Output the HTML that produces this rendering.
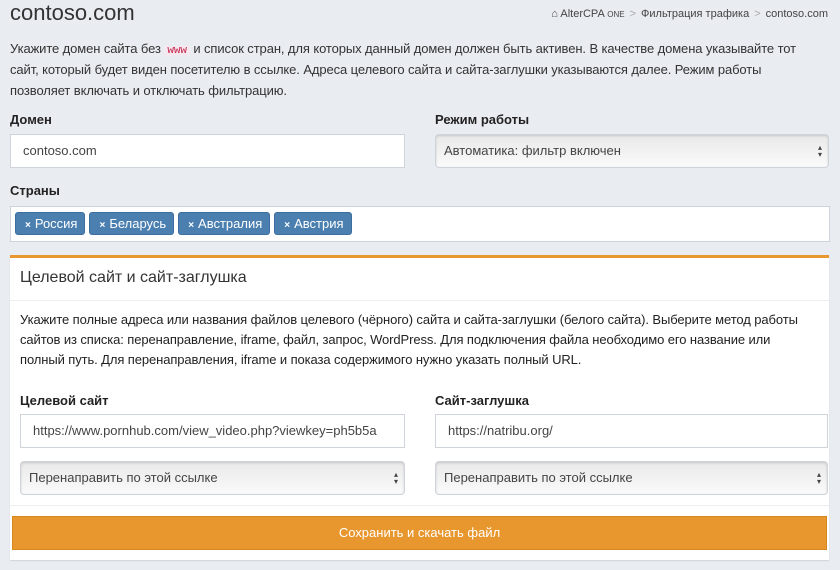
<!DOCTYPE html>
<html><head><meta charset="utf-8"><style>
*{box-sizing:border-box;margin:0;padding:0}
body{width:840px;height:570px;background:#e9ecf1;font-family:"Liberation Sans",sans-serif;color:#333;font-size:13px;position:relative;overflow:hidden}
.a{position:absolute}
h1{position:absolute;left:10px;top:0;font-size:22px;font-weight:normal;color:#333}
.bc{right:12px;top:8px;font-size:11px;color:#444}
.bc span{color:#aaa;margin:0 5px}
p{line-height:21px;font-size:13px;letter-spacing:-0.1px}
code{color:#c7254e;background:#f4e9ee;font-family:"Liberation Mono",monospace;font-size:11px;padding:0 3px;line-height:10px;display:inline-block}
label{position:absolute;font-weight:bold;font-size:13px;color:#222}
.in{position:absolute;background:#fff;border:1px solid #cfd3da;height:34px;padding-left:12px;line-height:32px;font-size:13px;color:#444;overflow:hidden;white-space:nowrap}
.sel{position:absolute;border:1px solid #cfd3da;border-radius:4px;height:34px;padding-left:8px;line-height:32px;font-size:13px;color:#444;background:linear-gradient(#e9e9ea,#fafafa);box-shadow:inset 0 1px 2px rgba(0,0,0,.15)}
.sel:after{content:"▴\A▾";white-space:pre;position:absolute;right:6px;top:9px;font-size:8px;line-height:7px;color:#444}
.tag{display:inline-block;background:#4a7fb0;color:#fff;border-radius:3px;height:23px;line-height:22px;padding:0 7px 0 9px;margin-right:4px;font-size:13px;border:1px solid #3d6f9e}
.tag b{font-size:10px;margin-right:4px}
.panel{position:absolute;left:10px;top:255px;width:819px;height:305px;background:#fff;border-top:3px solid #e8972e;box-shadow:0 1px 1px rgba(0,0,0,.1)}
</style></head><body>
<h1>contoso.com</h1>
<div class="a bc">⌂ AlterCPA <small style="font-size:8px">ONE</small><span>&gt;</span>Фильтрация трафика<span>&gt;</span>contoso.com</div>
<p class="a" style="left:10px;top:38px;width:815px">Укажите домен сайта без <code>www</code> и список стран, для которых данный домен должен быть активен. В качестве домена указывайте тот сайт, который будет виден посетителю в ссылке. Адреса целевого сайта и сайта-заглушки указываются далее. Режим работы позволяет включать и отключать фильтрацию.</p>
<label style="left:10px;top:112px">Домен</label>
<label style="left:435px;top:112px">Режим работы</label>
<div class="in" style="left:10px;top:134px;width:395px">contoso.com</div>
<div class="sel" style="left:435px;top:134px;width:394px">Автоматика: фильтр включен</div>
<label style="left:10px;top:183px">Страны</label>
<div class="in" style="left:10px;top:206px;width:820px;height:36px;padding-left:4px;line-height:normal;padding-top:5px"><span class="tag"><b>×</b>Россия</span><span class="tag"><b>×</b>Беларусь</span><span class="tag"><b>×</b>Австралия</span><span class="tag"><b>×</b>Австрия</span></div>
<div class="panel">
<div class="a" style="left:10px;top:11px;font-size:16px;color:#333">Целевой сайт и сайт-заглушка</div>
<div class="a" style="left:0;top:42px;width:819px;height:1px;background:#eceef1"></div>
<p class="a" style="left:10px;top:52px;width:795px;line-height:20px;color:#222">Укажите полные адреса или названия файлов целевого (чёрного) сайта и сайта-заглушки (белого сайта). Выберите метод работы сайтов из списка: перенаправление, iframe, файл, запрос, WordPress. Для подключения файла необходимо его название или полный путь. Для перенаправления, iframe и показа содержимого нужно указать полный URL.</p>
<label style="left:10px;top:135px">Целевой сайт</label>
<label style="left:425px;top:135px">Сайт-заглушка</label>
<div class="in" style="left:10px;top:156px;width:385px">https://www.pornhub.com/view_video.php?viewkey=ph5b5a</div>
<div class="in" style="left:425px;top:156px;width:393px">https://natribu.org/</div>
<div class="sel" style="left:10px;top:203px;width:385px">Перенаправить по этой ссылке</div>
<div class="sel" style="left:425px;top:203px;width:393px">Перенаправить по этой ссылке</div>
<div class="a" style="left:0;top:247px;width:819px;height:1px;background:#eceef1"></div>
<div class="a" style="left:2px;top:258px;width:815px;height:34px;background:#e8972e;border:1px solid #d8871e;color:#fff;text-align:center;line-height:32px;font-size:13px">Сохранить и скачать файл</div>
</div>
</body></html>
